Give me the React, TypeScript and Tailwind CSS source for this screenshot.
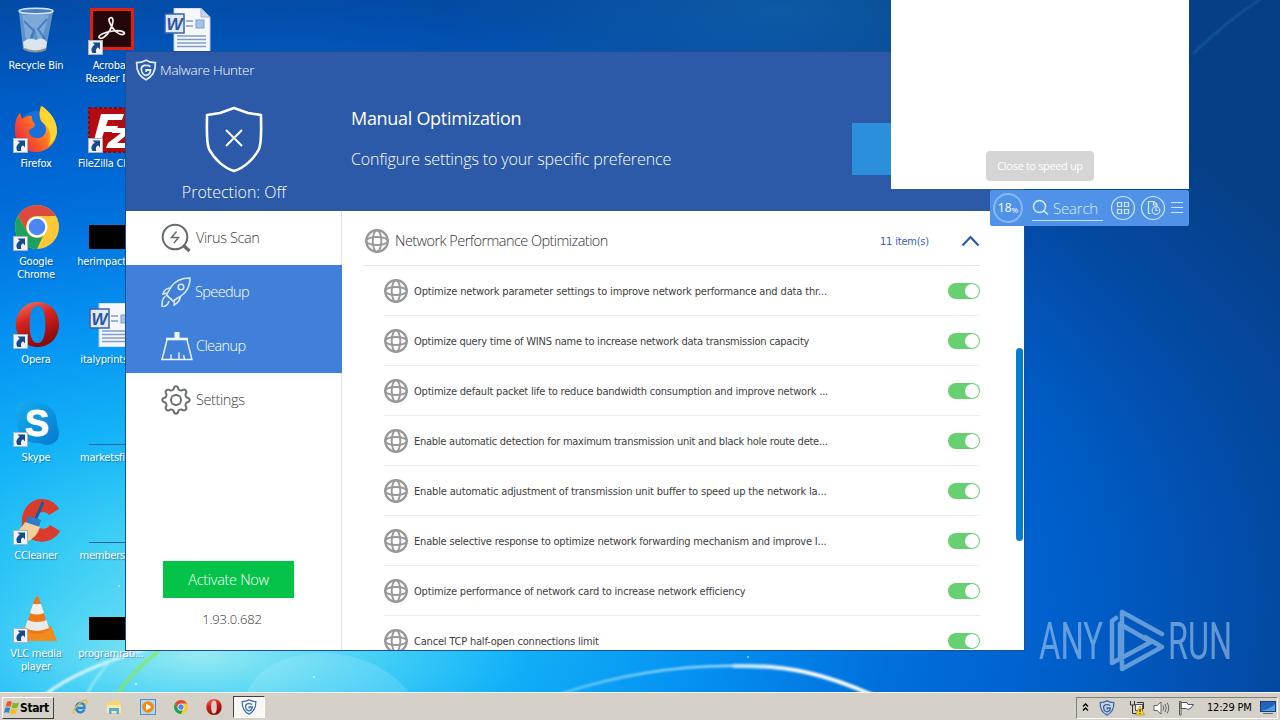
import type { ReactNode } from 'react';

const tahoma = "font-['DejaVu_Sans_Condensed','DejaVu_Sans',sans-serif]";
const light = "font-['Open_Sans','Noto_Sans',sans-serif] font-light";

function Wallpaper() {
    return (
        <svg className="absolute inset-0" width="1280" height="720" viewBox="0 0 1280 720">
            <defs>
                <radialGradient id="sky" gradientUnits="userSpaceOnUse" cx="0" cy="0" r="1" gradientTransform="translate(210 600) scale(1250 720)">
                    <stop offset="0" stopColor="#6fe0f0" />
                    <stop offset="0.13" stopColor="#38ccf5" />
                    <stop offset="0.25" stopColor="#12b2f8" />
                    <stop offset="0.4" stopColor="#0591f2" />
                    <stop offset="0.55" stopColor="#006fdc" />
                    <stop offset="0.7" stopColor="#005dc8" />
                    <stop offset="0.84" stopColor="#034ba6" />
                    <stop offset="1" stopColor="#063f88" />
                </radialGradient>
                <radialGradient id="glow" gradientUnits="userSpaceOnUse" cx="0" cy="0" r="1" gradientTransform="translate(780 10) scale(330 120)">
                    <stop offset="0" stopColor="#1468b0" stopOpacity="0.6" />
                    <stop offset="1" stopColor="#1468b0" stopOpacity="0" />
                </radialGradient>
                <radialGradient id="dawn" gradientUnits="userSpaceOnUse" cx="0" cy="0" r="1" gradientTransform="translate(200 655) scale(330 110)">
                    <stop offset="0" stopColor="#a5eef2" stopOpacity="0.85" />
                    <stop offset="0.5" stopColor="#5fdaf5" stopOpacity="0.5" />
                    <stop offset="1" stopColor="#38c8f8" stopOpacity="0" />
                </radialGradient>
                <linearGradient id="arc" gradientUnits="userSpaceOnUse" x1="560" y1="0" x2="875" y2="0">
                    <stop offset="0" stopColor="#65c8fb" />
                    <stop offset="0.5" stopColor="#a5defc" />
                    <stop offset="0.75" stopColor="#fff" />
                    <stop offset="1" stopColor="#fff" />
                </linearGradient>
                <filter id="soft"><feGaussianBlur stdDeviation="0.9" /></filter>
            </defs>
            <rect width="1280" height="720" fill="url(#sky)" />
            <rect width="1280" height="200" fill="url(#glow)" />
            <rect y="500" width="700" height="220" fill="url(#dawn)" />
            <path d="M247 692C270 640 370 640 408 692" fill="#fff" opacity="0.13" />
            <g fill="none" filter="url(#soft)">
                <path d="M46 694Q80 668 150 648" stroke="#d5f6ff" strokeWidth="3" />
                <path d="M87 694Q96 676 116 655" stroke="#9becfb" strokeWidth="2" />
                <path d="M117 694Q132 672 160 650" stroke="#8ae850" strokeWidth="2.500" />
                <path d="M560 694Q650 665 735 666" stroke="url(#arc)" strokeWidth="2.300" />
                <path d="M733 666C790 665 825 674 875 696" stroke="url(#arc)" strokeWidth="4" />
                <path d="M1193 54Q1225 22 1262 -2" stroke="#2466a6" strokeWidth="1.300" />
            </g>
            <g fill="#d5f6ff" opacity="0.7">
                <circle cx="136" cy="684" r="1.300" />
                <circle cx="314" cy="677" r="1.200" />
                <circle cx="119" cy="586" r="1" />
                <circle cx="748" cy="657" r="1" />
            </g>
        </svg>
    );
}

function ShieldG({ size, color }: { size: number; color: string }) {
    return (
        <svg width={size} height={size} viewBox="0 0 22 22" fill="none" stroke={color}>
            <path d="M11 1.200C8 3 5 3.600 1.600 3.600C1.400 11 3 17 11 20.800C19 17 20.600 11 20.400 3.600C17 3.600 14 3 11 1.200Z" strokeWidth="1.700" />
            <path d="M15.500 7.500C12 5.400 6.200 6 6.300 10.200C6.400 15 10 16.400 11.200 16.400C14 15.800 15.500 14 15.500 11H11.200V13" strokeWidth="1.800" />
        </svg>
    );
}

function Globe() {
    return (
        <svg className="shrink-0" width="24" height="24" viewBox="0 0 24 24" fill="none" stroke="#989898" strokeWidth="2.200">
            <circle cx="12" cy="12" r="10.800" />
            <ellipse cx="12" cy="12" rx="4.300" ry="10.800" strokeWidth="1.900" />
            <ellipse cx="12" cy="12" rx="10.800" ry="4" strokeWidth="1.900" />
        </svg>
    );
}

function Shortcut() {
    return (
        <svg className="absolute left-[1px] bottom-0" width="15" height="15" viewBox="0 0 15 15">
            <rect x="0.500" y="0.500" width="14" height="14" fill="#f0f4f8" stroke="#a9b4c0" />
            <path d="M4.500 2.500H12V9.500L10 7.200C8 8.500 7.500 10 8.300 13H4.500C2.500 9.500 3.500 7 6.800 4.800Z" fill="#174a8c" />
        </svg>
    );
}

function WordDoc() {
    return (
        <svg width="48" height="44" viewBox="0 0 48 44">
            <path d="M10 0H37L46 9V44H10Z" fill="#f4f8fe" stroke="#b5c5dd" />
            <path d="M37 0V9H46Z" fill="#c5d6ee" stroke="#9bb0d0" />
            <path d="M22 13H29M22 18H29M13 28H42M13 31.500H42M13 35H42M13 38.500H42" stroke="#7f9cc8" strokeWidth="1.300" />
            <rect x="32" y="12" width="8" height="8" fill="#a9c3e8" stroke="#7d9dcb" />
            <rect x="1" y="6" width="19" height="19" fill="#dfe9f8" stroke="#3b62a8" strokeWidth="1.500" />
            <text x="2.500" y="21.500" fontSize="17" fontStyle="italic" fontWeight="bold" fontFamily="Liberation Sans, sans-serif" fill="#2b559f" textLength="16" lengthAdjust="spacingAndGlyphs">W</text>
        </svg>
    );
}

function RecycleBin() {
    return (
        <svg width="44" height="46" viewBox="0 0 44 46">
            <path d="M5 5L9 42Q22 47 32 42L39 5Z" fill="#6f9dd0" opacity="0.85" />
            <path d="M8 8L13 37L20 20L26 38L35 8" fill="#a4c7e8" opacity="0.45" />
            <path d="M10 14L20 24L16 34M33 12L24 22L31 32" stroke="#2c63b4" fill="none" strokeWidth="2" opacity="0.6" />
            <path d="M9 35Q16 29 22 33Q28 29 33 35L32 42Q22 47 10 42Z" fill="#e9eef2" opacity="0.9" />
            <ellipse cx="22" cy="4" rx="17" ry="2.800" fill="#4880bd" stroke="#d5e4f2" strokeWidth="1.500" />
            <path d="M10 42Q22 47 32 42" stroke="#8d8f94" strokeWidth="2" fill="none" />
        </svg>
    );
}

function Acrobat() {
    return (
        <svg width="44" height="42" viewBox="0 0 44 42">
            <rect x="1.500" y="1.500" width="41" height="39" fill="#24070b" stroke="#e5200f" strokeWidth="3" />
            <path d="M20 10C24 8 24 15 20 22C17 28 11 32 9 29.500C8 27 15 24 23 23C31 22 36 24 34 26C31 28 25 24 22 19C19 14 18 11 20 10Z" fill="none" stroke="#f8efef" strokeWidth="1.700" />
        </svg>
    );
}

function Firefox() {
    return (
        <svg width="44" height="47" viewBox="0 0 44 47">
            <defs>
                <linearGradient id="fox" x1="0" y1="0.800" x2="1" y2="0.100">
                    <stop offset="0" stopColor="#e6214c" />
                    <stop offset="0.450" stopColor="#ff6a20" />
                    <stop offset="1" stopColor="#ffe13a" />
                </linearGradient>
            </defs>
            <circle cx="22" cy="22" r="17" fill="#1670d8" />
            <path d="M27 0C35 5 43 14 43 26C42 38 33 46 22 46C9 46 0 36 1 23C1 17 2 11 6 7L8 13Q13 9 18 10Q17 14 21 18L20 21L15 24C14 31 22 34 28 31C34 27 33 19 27 15C25 11 25 5 27 0Z" fill="url(#fox)" />
            <path d="M28 0C36 6 43 14 43 26C42 32 39 37 34 40C39 30 36 22 28 16C25 11 25 5 28 0Z" fill="#ffd52e" />
        </svg>
    );
}

function FileZilla() {
    return (
        <svg width="46" height="46" viewBox="0 0 46 46">
            <rect x="1" y="1" width="44" height="44" fill="#b40b10" stroke="#8d080c" strokeWidth="2" strokeDasharray="3 2" />
            <path d="M13 7H36L34 13H20L18 19H30L28 25H16L12 37H5Z" fill="#fff" />
            <path d="M25 21H43L42 25L29 36H41L40 41H18L20 36L33 26H24Z" fill="#fff" />
        </svg>
    );
}

function Chrome({ size }: { size: number }) {
    return (
        <svg width={size} height={size} viewBox="0 0 44 44">
            <circle cx="22" cy="22" r="22" fill="#fcc934" />
            <path d="M3 11A22 22 0 0 1 41 11H22A11 11 0 0 0 12.500 27.500Z" fill="#dd4b3e" />
            <path d="M3 11L12.500 27.500A11 11 0 0 0 28 31L22 44A22 22 0 0 1 3 11Z" fill="#1ba260" />
            <circle cx="22" cy="22" r="10.500" fill="#fff" />
            <circle cx="22" cy="22" r="8.300" fill="#4a87ee" />
        </svg>
    );
}

function Opera({ size }: { size: number }) {
    return (
        <svg width={size} height={size} viewBox="0 0 44 46">
            <defs>
                <linearGradient id="opera" x1="0" y1="0" x2="0.400" y2="1">
                    <stop offset="0" stopColor="#f47c6c" />
                    <stop offset="0.450" stopColor="#d4231c" />
                    <stop offset="1" stopColor="#8e0a0c" />
                </linearGradient>
            </defs>
            <path fillRule="evenodd" d="M22 0C35 0 44 10 44 23S35 46 22 46S0 36 0 23S9 0 22 0ZM22 4C16 4 14 12 14 23S16 42 22 42S30 34 30 23S28 4 22 4Z" fill="url(#opera)" />
        </svg>
    );
}

function Skype() {
    return (
        <svg width="44" height="44" viewBox="0 0 44 44">
            <defs>
                <linearGradient id="skype" x1="0" y1="0" x2="1" y2="1">
                    <stop offset="0" stopColor="#16aef0" />
                    <stop offset="1" stopColor="#0678d0" />
                </linearGradient>
            </defs>
            <path d="M12 0C17 0 19 2 22 2C34 2 42 11 42 22C42 26 44 28 44 32C44 40 38 44 32 44C28 44 26 42 22 42C10 42 2 33 2 22C2 18 0 17 0 12C0 5 5 0 12 0Z" fill="url(#skype)" />
            <text x="10" y="35" fontSize="36" fontWeight="bold" fontFamily="Liberation Sans, sans-serif" fill="#fff" stroke="#fff">S</text>
        </svg>
    );
}

function CCleaner() {
    return (
        <svg width="48" height="46" viewBox="0 0 48 46">
            <path d="M46 11C41 0 24 -3 15 7C6 17 7 33 16 40C27 47 41 44 47 33L37 27C33 33 25 32 23 24C21 16 31 10 36 17Z" fill="#d93b2c" />
            <path d="M30 4L21 25" stroke="#1e5aa0" strokeWidth="3" />
            <path d="M16 18L28 22L26 29L12 25Z" fill="#2d7cc5" />
            <path d="M12 24L27 29Q24 40 13 44L0 35Q8 32 12 24Z" fill="#f2cf9b" />
        </svg>
    );
}

function Vlc() {
    return (
        <svg width="44" height="47" viewBox="0 0 44 47">
            <path d="M10 30L36 30L42 45H3Z" fill="#f08a1c" />
            <path d="M20 2Q22 -1 24 2L34 34Q22 42 10 34Z" fill="#ef7716" />
            <path d="M18 8H26L29 17Q22 20 15 17Z" fill="#f3f1ee" />
            <path d="M12.500 24Q22 28 31.500 24L34 32Q22 38 10 32Z" fill="#eceae7" />
        </svg>
    );
}

interface DesktopIconProps {
    place: string;
    label: ReactNode;
    shortcut?: boolean;
    children: ReactNode;
}

function DesktopIcon({ place, label, shortcut, children }: DesktopIconProps) {
    return (
        <div className={`absolute w-[94px] flex flex-col items-center ${place}`}>
            <div className="relative w-[48px] h-[47px] flex items-end justify-center">
                {children}
                {shortcut && <Shortcut />}
            </div>
            <div className="mt-[4px] text-center text-[11px] leading-[13px] tracking-[-0.2px] text-white whitespace-nowrap [text-shadow:1px_1px_1px_#0a3a7a80]">{label}</div>
        </div>
    );
}

function Desktop() {
    return (
        <>
            <DesktopIcon place="left-[-11px] top-[8px]" label="Recycle Bin"><div className="pb-[2px]"><RecycleBin /></div></DesktopIcon>
            <DesktopIcon place="left-[-11px] top-[106px]" label="Firefox" shortcut><Firefox /></DesktopIcon>
            <DesktopIcon place="left-[-11px] top-[204px]" label={<>Google<br />Chrome</>} shortcut><div className="pb-[2px] pl-[2px]"><Chrome size={44} /></div></DesktopIcon>
            <DesktopIcon place="left-[-11px] top-[302px]" label="Opera" shortcut><div className="pb-[2px] pl-[2px]"><Opera size={45} /></div></DesktopIcon>
            <DesktopIcon place="left-[-11px] top-[400px]" label="Skype" shortcut><div className="pb-[2px] pl-[2px]"><Skype /></div></DesktopIcon>
            <DesktopIcon place="left-[-11px] top-[498px]" label="CCleaner" shortcut><div className="pb-[1px] pl-[2px]"><CCleaner /></div></DesktopIcon>
            <DesktopIcon place="left-[-11px] top-[596px]" label={<>VLC media<br />player</>} shortcut><div className="pl-[2px]"><Vlc /></div></DesktopIcon>

            <DesktopIcon place="left-[64px] top-[8px]" label={<>Acrobat<br />Reader DC</>} shortcut><div className="pb-[5px] pl-[2px]"><Acrobat /></div></DesktopIcon>
            <DesktopIcon place="left-[64px] top-[106px]" label="FileZilla Client" shortcut><FileZilla /></DesktopIcon>
            <DesktopIcon place="left-[64px] top-[204px]" label="herimpacts.rtf"><div className="w-[46px] h-[24px] mb-[2px] ml-[2px] bg-black" /></DesktopIcon>
            <DesktopIcon place="left-[64px] top-[302px]" label="italyprints.rtf"><div className="pb-[2px] ml-[4px]"><WordDoc /></div></DesktopIcon>
            <DesktopIcon place="left-[64px] top-[400px]" label="marketsfiel..."><div className="w-[44px] h-px mb-[2px] bg-[#12689c]" /></DesktopIcon>
            <DesktopIcon place="left-[64px] top-[498px]" label="membershi..."><div className="w-[44px] h-px mb-[2px] bg-[#12689c]" /></DesktopIcon>
            <DesktopIcon place="left-[64px] top-[596px]" label="programrati..."><div className="w-[46px] h-[23px] mb-[3px] ml-[2px] bg-black" /></DesktopIcon>
            <DesktopIcon place="left-[141px] top-[5px]" label=""><WordDoc /></DesktopIcon>
        </>
    );
}

const menu = [
    {
        name: 'Virus Scan', active: false, tracking: 'tracking-[-0.4px]',
        icon: (
            <svg width="30" height="30" viewBox="0 0 30 30" fill="none" stroke="#686c70">
                <circle cx="14" cy="14" r="12.300" strokeWidth="2" />
                <path d="M22.500 22.500L28.500 28" strokeWidth="3.400" />
                <path d="M15.500 8.500L10.500 14.500H17.500L13 20" strokeWidth="1.500" />
            </svg>
        ),
    },
    {
        name: 'Speedup', active: true, tracking: 'tracking-[-0.6px] -ml-px',
        icon: (
            <svg width="30" height="30" viewBox="0 0 30 30" fill="none" stroke="#d9e9ff" strokeWidth="1.500">
                <path d="M29 1C21 1 14 4 10 10L5.500 18L12 24L20 19C26 15 29 9 29 1Z" />
                <circle cx="20" cy="10" r="2.800" />
                <path d="M10 11C6 11 3 13 2 17L7 16M19 20C19 24 17 26 13 28L13.500 23.500M4.500 19C1 22 1 25 1 30C5 29 7 28 8 24M5.500 18L12 24" />
            </svg>
        ),
    },
    {
        name: 'Cleanup', active: true, tracking: 'tracking-[-0.6px]',
        icon: (
            <svg width="32" height="30" viewBox="0 0 32 30" fill="none" stroke="#eef5ff" strokeWidth="1.400">
                <path d="M13.500 1H18.500V7H13.500Z" fill="#eef5ff" stroke="none" />
                <path d="M5 8H27" strokeWidth="2.600" />
                <path d="M6 9L1 28.500H31L26 9M10 28V23.500M18 28V21.500M23.500 28L22.500 24" />
            </svg>
        ),
    },
    {
        name: 'Settings', active: false, tracking: 'tracking-[-0.4px]',
        icon: (
            <svg width="30" height="30" viewBox="0 0 30 30" fill="none" stroke="#686c70" strokeWidth="1.900" strokeLinejoin="round">
                <path d="M12.500 4.500Q13 1.300 15 1.300T17.500 4.500Q19 5.600 20.700 5.600Q23.200 3.500 24.700 5.300T24.400 9.300Q24.400 11 25.500 12.500Q28.700 13 28.700 15T25.500 17.500Q24.400 19 24.400 20.700Q26.500 23.200 24.700 24.700T20.700 24.400Q19 24.400 17.500 25.500Q17 28.700 15 28.700T12.500 25.500Q11 24.400 9.300 24.400Q6.800 26.500 5.300 24.700T5.600 20.700Q5.600 19 4.500 17.500Q1.300 17 1.300 15T4.500 12.500Q5.600 11 5.600 9.300Q3.500 6.800 5.300 5.300T9.300 5.600Q11 5.600 12.500 4.500Z" />
                <circle cx="15" cy="15" r="5" />
            </svg>
        ),
    },
];

const options = [
    { text: 'Optimize network parameter settings to improve network performance and data thr...', tracking: 'tracking-[-0.15px]' },
    { text: 'Optimize query time of WINS name to increase network data transmission capacity', tracking: 'tracking-[-0.225px]' },
    { text: 'Optimize default packet life to reduce bandwidth consumption and improve network ...', tracking: 'tracking-[-0.2px]' },
    { text: 'Enable automatic detection for maximum transmission unit and black hole route dete...', tracking: 'tracking-[-0.25px]' },
    { text: 'Enable automatic adjustment of transmission unit buffer to speed up the network la...', tracking: 'tracking-[-0.165px]' },
    { text: 'Enable selective response to optimize network forwarding mechanism and improve I...', tracking: 'tracking-[-0.2px]' },
    { text: 'Optimize performance of network card to increase network efficiency', tracking: 'tracking-[-0.185px]' },
    { text: 'Cancel TCP half-open connections limit', tracking: 'tracking-[-0.2px]' },
];

function Toggle() {
    return (
        <div className="w-[32px] h-[16px] rounded-full bg-[#68cf72] flex items-center justify-end pr-px">
            <div className="w-[14px] h-[14px] rounded-full bg-white" />
        </div>
    );
}

function MalwareHunter() {
    return (
        <div className="absolute left-[125px] top-[51px] w-[900px] h-[600px] border border-[#1d4f91] bg-white flex flex-col overflow-hidden whitespace-nowrap">
            <header className="h-[159px] shrink-0 bg-[#2c59a8] text-white flex">
                <div className="w-[216px] flex flex-col">
                    <div className="flex items-center gap-[3px] pl-[9px] pt-[6px] h-[29px]">
                        <ShieldG size={22} color="#dcecff" />
                        <span className={`${light} text-[13.500px] leading-[18px] tracking-[-0.25px] pt-px`}>Malware Hunter</span>
                    </div>
                    <div className="flex flex-col items-center pt-[25px]">
                        <svg width="60" height="68" viewBox="0 0 60 68" fill="none" stroke="#fff" strokeWidth="2.600">
                            <path d="M30 2L16 7L3 9C3 24 2 36 5 43C10 53 20 62 30 65C40 62 50 53 55 43C58 36 57 24 57 9L44 7Z" strokeLinejoin="round" />
                            <path d="M22 24L38 40M38 24L22 40" strokeWidth="2" />
                        </svg>
                        <span className={`${light} mt-[7px] text-[16px] leading-[22px]`}>Protection: Off</span>
                    </div>
                </div>
                <div className="flex-1 pl-[9px] pt-[52px]">
                    <h1 className="font-['Open_Sans',sans-serif] text-[18px] leading-[28px] tracking-[-0.3px]">Manual Optimization</h1>
                    <p className={`${light} mt-[14px] text-[16px] leading-[26px] tracking-[-0.12px]`}>Configure settings to your specific preference</p>
                </div>
                <div className="w-[172px] pt-[71px]">
                    <div className="w-[140px] h-[52px] bg-[#2b8fdd]" />
                </div>
            </header>
            <div className="flex flex-1 min-h-0">
                <nav className="w-[216px] shrink-0 border-r border-[#dfe3e8] flex flex-col">
                    {menu.map(item => (
                        <div
                            key={item.name}
                            className={`h-[54px] shrink-0 pl-[35px] flex items-center ${item.active ? '-mr-px bg-[#4180da] text-white' : 'text-[#404040]'}`}
                        >
                            <div className="w-[32px] flex">{item.icon}</div>
                            <span className={`${light} text-[14.500px] pl-[3px] ${item.tracking}`}>{item.name}</span>
                        </div>
                    ))}
                    <div className={`${light} mt-[134px] ml-[37px] w-[131px] h-[37px] bg-[#04c348] text-white text-[14.500px] tracking-[-0.3px] flex items-center justify-center`}>Activate Now</div>
                    <div className={`${light} mt-[11px] pr-[3px] text-center text-[13px] leading-[20px] tracking-[-0.15px] text-[#333]`}>1.93.0.682</div>
                </nav>
                <main className="w-[640px] shrink-0 pl-[21px] pt-[5px] text-[#404040]">
                    <div className="w-[617px] h-[50px] border-b border-[#e4e4e4] flex items-center pl-[2px]">
                        <Globe />
                        <span className={`${light} ml-[6px] text-[14.500px] tracking-[-0.55px] text-[#333]`}>Network Performance Optimization</span>
                        <span className="ml-auto pt-[3px] text-[11px] tracking-[-0.2px] text-[#3964ad]">11 item(s)</span>
                        <svg className="ml-[32px]" width="19" height="12" viewBox="0 0 19 12" fill="none" stroke="#2c59a8" strokeWidth="2.200">
                            <path d="M1.500 10.500L9.500 2L17.500 10.500" />
                        </svg>
                    </div>
                    <div className="ml-[21px] w-[596px]">
                        {options.map(option => (
                            <div key={option.text} className="h-[50px] border-b border-[#ececec] flex items-center">
                                <Globe />
                                <span className={`ml-[6px] pt-[3px] text-[11px] ${option.tracking}`}>{option.text}</span>
                                <div className="ml-auto"><Toggle /></div>
                            </div>
                        ))}
                    </div>
                </main>
                <div className="ml-auto w-[8px] pt-[137px]">
                    <div className="w-[7px] h-[193px] rounded-full bg-[#0d79cf]" />
                </div>
            </div>
        </div>
    );
}

function SpeedWidget() {
    return (
        <div className="absolute left-[891px] top-0 w-[298px] flex flex-col items-end whitespace-nowrap">
            <div className="w-full h-[189px] bg-white flex items-end pl-[95px] pb-[8px]">
                <div className="font-['Open_Sans',sans-serif] w-[108px] h-[30px] rounded-[4px] bg-[#d5d5d5] text-white text-[11px] tracking-[-0.35px] flex items-center justify-center">Close to speed up</div>
            </div>
            <div className={`${light} mt-[1px] w-[199px] h-[36px] rounded-[2px] bg-[#5192e9] text-[#d8ebff] flex items-center pl-[3px]`}>
                <div className="w-[30px] h-[30px] rounded-full border-2 border-[#86b8f5] flex items-center justify-center font-normal text-white">
                    <span className="text-[12px]">18</span><span className="text-[8px] pt-[3px]">%</span>
                </div>
                <div className="ml-[9px] w-[71px] h-[26px] mt-[-1px] border-b border-[#c5dffc] flex items-center">
                    <svg width="17" height="17" viewBox="0 0 17 17" fill="none" stroke="#d8ebff" strokeWidth="1.500">
                        <circle cx="7.500" cy="7.500" r="6" />
                        <path d="M12 12L16 15.500" />
                    </svg>
                    <span className="ml-[4px] pt-[2px] text-[15px] tracking-[-0.2px]">Search</span>
                </div>
                <svg className="ml-[7px]" width="76" height="26" viewBox="0 0 76 26" fill="none" stroke="#d0e5ff" strokeWidth="1.200">
                    <circle cx="13" cy="13" r="11.500" />
                    <path d="M7.500 7.500H11.500V11.500H7.500ZM14.500 7.500H18.500V11.500H14.500ZM7.500 14.500H11.500V18.500H7.500ZM14.500 14.500H18.500V18.500H14.500Z" />
                    <circle cx="43" cy="13" r="11.500" />
                    <path d="M41 18.500H38.500V6.500H44L47 9.500V11M43.500 6.500V10H47" />
                    <circle cx="46" cy="15.500" r="3.800" />
                    <path d="M46 13V15.500H48M61 7.500H73M61 12.500H73M61 17.500H73" />
                </svg>
            </div>
        </div>
    );
}

function AnyRun() {
    return (
        <svg className="absolute left-[1036px] top-[596px]" width="204" height="90" viewBox="0 -10 204 90" opacity="0.5">
            <g fill="#c4dff8" fontFamily="Roboto, sans-serif" fontSize="51">
                <text x="3" y="53" textLength="64" lengthAdjust="spacingAndGlyphs">ANY</text>
                <text x="132" y="53" textLength="64" lengthAdjust="spacingAndGlyphs">RUN</text>
            </g>
            <g fill="none" stroke="#c4dff8" strokeWidth="4.500" strokeLinejoin="round" strokeLinecap="round">
                <path d="M80 12L76 15V57L115 36L84 18V51" />
                <path d="M86 55V63L126 41L109 31M126 28L86 6V48" />
            </g>
        </svg>
    );
}

function Taskbar() {
    return (
        <div className="absolute left-0 bottom-0 w-full h-[28px] bg-[#d5d0c8] border-t border-[#f7f5f2] flex items-center text-black">
            <div className="ml-[2px] mt-[2px] w-[52px] h-[22px] border border-t-white border-l-white border-r-[#404040] border-b-[#404040] flex items-center pl-[1px]">
                <svg width="16" height="16" viewBox="0 0 16 16">
                    <path d="M3 2Q5.500 0 8 2L6.500 7Q4 5.500 1.500 7Z" fill="#ea5a24" />
                    <path d="M9 2.500Q12 4 15 2.500L13.500 7.500Q10.500 9 7.500 7.500Z" fill="#7db928" />
                    <path d="M1.200 8Q4 6.500 6.200 8L4.800 13Q2.500 11.500 0 13Z" fill="#2b84d0" />
                    <path d="M7.200 8.500Q10 10 13.200 8.500L11.800 13.500Q8.500 15 5.700 13.500Z" fill="#f8bd20" />
                </svg>
                <span className="text-[12px] font-bold tracking-[-0.4px]">Start</span>
            </div>
            <div className="ml-[18px] flex items-center gap-[18px]">
                <svg width="16" height="16" viewBox="0 0 16 16" fill="none">
                    <path d="M12.500 11Q8 16 4.500 11Q3 5 8 4Q13 4 12.500 9H5" stroke="#2589d8" strokeWidth="2.400" />
                    <path d="M2 15Q0 12 6 6T14.500 1.500Q16 3 13 6" stroke="#e8b82c" strokeWidth="1.300" />
                </svg>
                <svg width="16" height="16" viewBox="0 0 16 16">
                    <path d="M1 3H6L7.500 1H14V14H1Z" fill="#f0d77c" />
                    <path d="M1 6H15V14H1Z" fill="#f9e9a5" />
                    <path d="M3 9H13V15H10.500V12H5.500V15H3Z" fill="#58aadb" />
                </svg>
                <svg width="16" height="16" viewBox="0 0 16 16">
                    <rect x="0.500" y="0.500" width="15" height="15" fill="#b7d8f2" stroke="#4e8fc7" />
                    <circle cx="8" cy="8" r="5.800" fill="#f58713" />
                    <path d="M6 4.500L11.500 8L6 11.500Z" fill="#fff" />
                </svg>
                <Chrome size={14} />
                <Opera size={16} />
            </div>
            <div className="ml-[11px] mt-[1px] w-[32px] h-[22px] bg-[#f8f7f5] border border-t-[#404040] border-l-[#404040] border-r-white border-b-white flex items-center justify-center">
                <ShieldG size={16} color="#3d6fae" />
            </div>
            <div className="ml-auto mt-[2px] mr-[2px] w-[202px] h-[22px] border border-t-[#808080] border-l-[#808080] border-r-white border-b-white flex items-center pl-[4px]">
                <svg width="9" height="12" viewBox="0 0 9 12" fill="none" stroke="#000" strokeWidth="1.300">
                    <path d="M2 4.500L4.500 2L7 4.500M2 8.500L4.500 6L7 8.500" />
                </svg>
                <div className="ml-[9px]"><ShieldG size={16} color="#2f68bd" /></div>
                <svg className="ml-[14px]" width="16" height="16" viewBox="0 0 16 16">
                    <path d="M1.500 1V5H5.500V1M3.500 5V13.500H8M8 2.500H14.500V9" fill="none" stroke="#333" />
                    <rect x="6.500" y="4.500" width="7" height="6" fill="#eee" stroke="#555" />
                    <path d="M11 6L15.500 15H6.500Z" fill="#f6d92a" stroke="#a58808" strokeWidth="0.600" />
                    <path d="M11 9V12M11 13V14" stroke="#000" />
                </svg>
                <svg className="ml-[8px]" width="17" height="16" viewBox="0 0 17 16" fill="none" stroke="#666">
                    <path d="M1 5.500H4L8 2V14L4 10.500H1Z" fill="#fff" />
                    <path d="M10 5.500Q11.500 8 10 10.500M12 4Q14.500 8 12 12M14 2.500Q17.500 8 14 13.500" />
                </svg>
                <svg className="ml-[8px]" width="17" height="16" viewBox="0 0 17 16" fill="#fff" stroke="#555">
                    <path d="M1.500 1.500H3V15H1.500ZM3 2.500H9L10 4.500H15.500L13 8L10 9.500L8.500 8.500H3Z" />
                </svg>
                <span className="ml-[12px] pt-[2px] text-[11px] tracking-[-0.2px] whitespace-nowrap">12:29 PM</span>
                <svg className="ml-auto mr-[1px]" width="16" height="15" viewBox="0 0 16 15">
                    <rect x="0.500" y="1.500" width="15" height="10" fill="#2364bb" stroke="#173e78" />
                    <path d="M1 11Q9 10 15 4V11Z" fill="#4e9be3" />
                    <path d="M3 13.500H13" stroke="#5d6d80" />
                </svg>
            </div>
        </div>
    );
}

export default function App() {
    return (
        <div className={`relative w-[1280px] h-[720px] overflow-hidden ${tahoma}`}>
            <Wallpaper />
            <Desktop />
            <MalwareHunter />
            <SpeedWidget />
            <AnyRun />
            <Taskbar />
        </div>
    );
}
